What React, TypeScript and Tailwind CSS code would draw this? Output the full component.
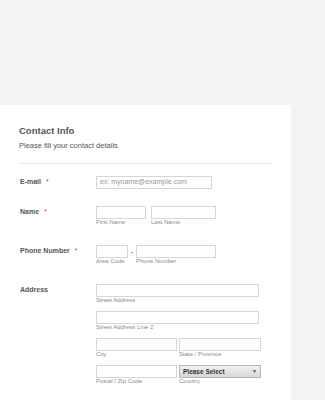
import React from 'react';

function Box({ w, sub, className = '' }: { w: string; sub?: string; className?: string }) {
  return (
    <div className={`flex flex-col ${className}`}>
      <div className={`${w} h-[13px] border border-[#d6d6d6] bg-white`} />
      {sub && <span className="text-[6px] leading-[7px] text-[#8a8a8a]">{sub}</span>}
    </div>
  );
}

function Label({ text, required }: { text: string; required?: boolean }) {
  return (
    <div className="w-[76px] shrink-0 h-[13px] flex items-center text-[7px] font-bold text-[#555]">
      {text}
      {required && <span className="ml-[5px] text-[#e33] font-normal">*</span>}
    </div>
  );
}

export default function App() {
  return (
    <div
      className="w-[325px] h-[400px] overflow-hidden bg-[#f3f3f3] pt-[105px]"
      style={{ fontFamily: '"Liberation Sans", Arial, sans-serif' }}
    >
      <div className="w-[291px] h-[320px] bg-white pt-[19px] pl-[19px]">
        <h2 className="text-[9.5px] leading-[13px] font-bold text-[#555]">Contact Info</h2>
        <p className="mt-[4px] text-[7.5px] leading-[10px] text-[#555]">Please fill your contact details</p>
        <div className="mt-[12px] w-[253px] border-b border-[#e8e8e8]" />

        <div className="mt-[12px] flex pl-[1px]">
          <Label text="E-mail" required />
          <div className="w-[116px] h-[13px] border border-[#d6d6d6] flex items-center px-[3px] text-[7px] text-[#999]">
            ex: myname@example.com
          </div>
        </div>

        <div className="mt-[17px] flex pl-[1px]">
          <Label text="Name" required />
          <div className="flex gap-[5px]">
            <Box w="w-[50px]" sub="First Name" />
            <Box w="w-[65px]" sub="Last Name" />
          </div>
        </div>

        <div className="mt-[19px] flex pl-[1px]">
          <Label text="Phone Number" required />
          <div className="flex">
            <Box w="w-[32px]" sub="Area Code" />
            <span className="w-[8px] h-[13px] flex items-center justify-center text-[8px] text-[#555]">-</span>
            <Box w="w-[80px]" sub="Phone Number" />
          </div>
        </div>

        <div className="mt-[19px] flex pl-[1px]">
          <Label text="Address" />
          <div className="flex flex-col gap-[7px]">
            <Box w="w-[163px]" sub="Street Address" />
            <Box w="w-[163px]" sub="Street Address Line 2" />
            <div className="flex gap-[2px]">
              <Box w="w-[81px]" sub="City" />
              <Box w="w-[82px]" sub="State / Province" />
            </div>
            <div className="flex gap-[2px]">
              <Box w="w-[81px]" sub="Postal / Zip Code" />
              <div className="flex flex-col">
                <div className="w-[82px] h-[13px] border border-[#b5b5b5] bg-gradient-to-b from-[#f2f2f2] to-[#d6d6d6] flex items-center justify-between px-[3px] text-[6.5px] font-bold text-[#333]">
                  <span>Please Select</span>
                  <span className="text-[5px] text-[#444]">▼</span>
                </div>
                <span className="text-[6px] leading-[7px] text-[#8a8a8a]">Country</span>
              </div>
            </div>
          </div>
        </div>
      </div>
    </div>
  );
}
